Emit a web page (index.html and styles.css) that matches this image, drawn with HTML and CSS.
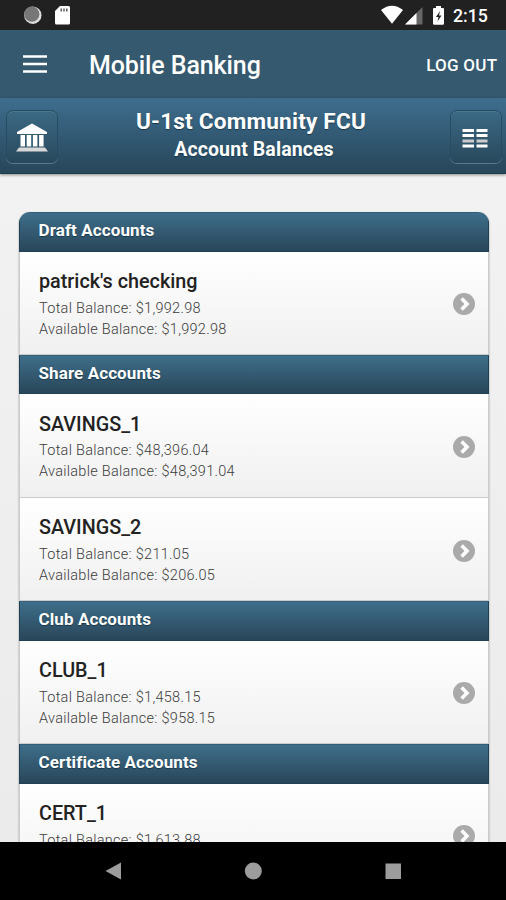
FILE: index.html
```html
<!DOCTYPE html>
<html lang="en">
<head>
<meta charset="utf-8">
<title>Mobile Banking</title>
<link rel="stylesheet" href="styles.css">
</head>
<body>
<svg width="0" height="0" class="defs">
  <symbol id="chevron" viewBox="0 0 22 22"><circle cx="11" cy="11" r="11" fill="#aaa"/><path d="M8.6 5.6 14 11l-5.4 5.4" fill="none" stroke="#fff" stroke-width="3.6"/></symbol>
</svg>
<div class="statusbar">
  <svg class="status-left" width="80" height="30" viewBox="0 0 80 30">
    <circle cx="32.8" cy="15.2" r="8.7" fill="#ddd"/><circle cx="31.8" cy="14.2" r="7.6" fill="#777"/>
    <path d="M60 6h8.500q1.500 0 1.500 1.500v15.500q0 1.500-1.500 1.500h-12q-1.500 0-1.500-1.500V11z" fill="#fff"/>
    <path d="M61.200 8.500v3M64 8.500v3M66.800 8.500v3" stroke="#444" stroke-width="1.300"/>
  </svg>
  <div class="status-right">
    <svg width="70" height="30" viewBox="0 0 70 30">
      <path d="M1 10Q12 1.500 23 10L12 23.800z" fill="#fff"/>
      <path d="M42.500 7v17.500H25z" fill="#666"/><path d="M36.500 13v11.500H25z" fill="#fff"/>
      <path d="M56 6h5v2h2q1 0 1 1v14.500q0 1.200-1.200 1.200h-8.600q-1.200 0-1.200-1.200V9q0-1 1-1h2z" fill="#fff"/>
      <path d="m60 11-4 6h2.500l-1 4.500 4-6H59z" fill="#222"/>
    </svg>
    <span class="clock">2:15</span>
  </div>
</div>
<header class="appbar">
  <svg class="menu" width="24" height="18" viewBox="0 0 24 18"><path d="M0 1.500h24M0 9h24M0 16.500h24" stroke="#fff" stroke-width="2.600"/></svg>
  <span class="app-title">Mobile Banking</span>
  <span class="logout">LOG OUT</span>
</header>
<div class="subbar">
  <div class="btn">
    <svg width="34" height="30" viewBox="0 0 34 30"><path d="M17 1.500 32 10v2H2v-2zM5.500 13h4.500v11.500H5.500zm6.200 0h4.500v11.500h-4.500zm6.200 0h4.500v11.500h-4.500zm6.200 0h4.500v11.500h-4.500z" fill="#fff"/><path d="M4 25.500h26L33 29.500H1z" fill="#d8d8d8"/></svg>
  </div>
  <div class="heading">
    <div class="inst">U-1st Community FCU</div>
    <div class="page">Account Balances</div>
  </div>
  <div class="btn right">
    <svg width="26" height="20" viewBox="0 0 26 20"><path d="M.5 2.500h11.500M14.500 2.500h11M.5 7.500h11.500M14.500 7.500h11M.5 18h11.500M14.500 18h11" stroke="#fff" stroke-width="3"/><path d="M.5 13h11.500M14.500 13h11" stroke="#ccc" stroke-width="3"/></svg>
  </div>
</div>
<main class="content">
  <div class="list">
    <h2 class="group">Draft Accounts</h2>
    <div class="item"><div><div class="name">patrick's checking</div><div class="bal">Total Balance: $1,992.98</div><div class="bal">Available Balance: $1,992.98</div></div><svg class="go"><use href="#chevron"/></svg></div>
    <h2 class="group">Share Accounts</h2>
    <div class="item"><div><div class="name">SAVINGS_1</div><div class="bal">Total Balance: $48,396.04</div><div class="bal">Available Balance: $48,391.04</div></div><svg class="go"><use href="#chevron"/></svg></div>
    <div class="item"><div><div class="name">SAVINGS_2</div><div class="bal">Total Balance: $211.05</div><div class="bal">Available Balance: $206.05</div></div><svg class="go"><use href="#chevron"/></svg></div>
    <h2 class="group">Club Accounts</h2>
    <div class="item"><div><div class="name">CLUB_1</div><div class="bal">Total Balance: $1,458.15</div><div class="bal">Available Balance: $958.15</div></div><svg class="go"><use href="#chevron"/></svg></div>
    <h2 class="group">Certificate Accounts</h2>
    <div class="item"><div><div class="name">CERT_1</div><div class="bal">Total Balance: $1,613.88</div></div><svg class="go"><use href="#chevron"/></svg></div>
  </div>
</main>
<nav class="navbar">
  <svg width="506" height="58" viewBox="0 0 506 58" fill="#9c9c9c"><path d="M105.500 29 121 20.500v17z"/><circle cx="253.300" cy="29" r="8.500"/><rect x="385.500" y="21.500" width="15.500" height="15.500"/></svg>
</nav>
</body>
</html>
```
FILE: styles.css
```css
* { box-sizing: border-box; }
body {
  margin: 0;
  width: 506px;
  height: 900px;
  overflow: hidden;
  display: flex;
  flex-direction: column;
  background: #eee;
  font-family: Roboto, sans-serif;
  color: #222;
}
svg { display: block; flex: none; }
.defs { display: none; }
.statusbar {
  height: 30px;
  flex: none;
  display: flex;
  justify-content: space-between;
  background: #212121;
}
.status-right { display: flex; width: 126px; }
.clock {
  margin-left: 3px;
  color: #fff;
  font-size: 17.7px;
  font-weight: 500;
  line-height: 32px;
}
.appbar {
  height: 68px;
  flex: none;
  display: flex;
  align-items: center;
  padding: 1px 9px 0 23px;
  background: #35596e;
  color: #fff;
}
.menu { margin-top: -1px; }
.app-title {
  margin: 2px 0 0 42px;
  flex: 1;
  font-size: 25px;
  font-weight: 500;
  letter-spacing: -.1px;
}
.logout { font-size: 17px; font-weight: 500; letter-spacing: .25px; margin-right: -.25px; }
.subbar {
  position: relative;
  height: 76px;
  flex: none;
  display: flex;
  align-items: center;
  justify-content: space-between;
  padding: 2px 4px 0 6px;
  background: linear-gradient(#3e6e8e, #27465a);
  border-bottom: 1px solid #1f3b4d;
  box-shadow: 0 1px 3px rgba(0, 0, 0, .45);
  color: #fff;
  text-shadow: 0 1px 1px #16384d;
}
.btn {
  width: 52px;
  height: 53px;
  display: grid;
  place-items: center;
  border: 1px solid #254c63;
  border-radius: 7px;
  background: linear-gradient(#3b6984, #29495d);
  box-shadow: 0 1px 0 rgba(255, 255, 255, .25), inset 0 1px 0 rgba(255, 255, 255, .1);
}
.right { padding: 2px 2px 0 0; }
.heading { text-align: center; font-weight: 700; margin-top: -1px; }
.inst { font-size: 22.6px; line-height: 28px; letter-spacing: .2px; margin-left: -6px; }
.page { font-size: 19.5px; line-height: 28px; letter-spacing: .1px; margin: 0 -3px 0 -3px; }
.content {
  flex: 1;
  min-height: 0;
  overflow: hidden;
  padding: 38px 17px 0 19px;
  background: linear-gradient(#f2f2f2, #ebebeb);
}
.list {
  border-radius: 11px 11px 0 0;
  box-shadow: 0 1px 2px rgba(0, 0, 0, .4);
  overflow: hidden;
}
.group {
  margin: 0;
  height: 39.5px;
  padding-left: 18.5px;
  border: 1px solid #1f4155;
  border-top-color: #345f78;
  background: linear-gradient(#3e6e8a, #294659);
  color: #fff;
  font-size: 17px;
  letter-spacing: .1px;
  line-height: 35.5px;
  text-shadow: 0 1px 1px #16384d;
}
.item {
  height: 103.4px;
  display: flex;
  align-items: flex-start;
  justify-content: space-between;
  padding: 16.6px 13px 0 19px;
  border: 1px solid #ccc;
  border-top: 0;
  background: linear-gradient(#fff, #f0f0f0);
}
.name {
  font-size: 19.8px;
  font-weight: 500;
  line-height: 28px;
  margin-bottom: 1.5px;
}
.bal {
  color: #3c3c3c;
  font-size: 14.5px;
  font-weight: 300;
  letter-spacing: .28px;
  line-height: 21px;
}
.go { width: 22px; height: 22px; margin-top: 25.2px; }
.navbar { height: 58px; flex: none; background: #000; }
```
